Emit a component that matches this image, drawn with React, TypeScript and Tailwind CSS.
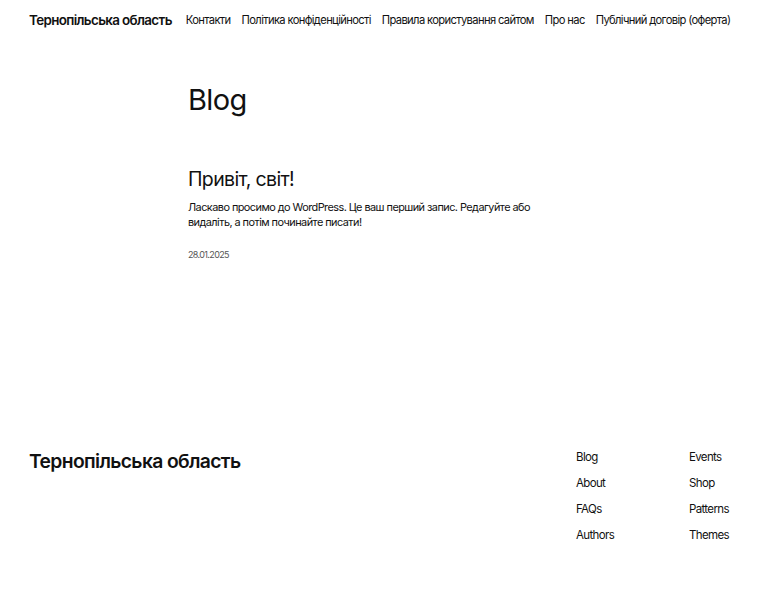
import React from 'react';

const navLinks = [
  'Контакти',
  'Політика конфіденційності',
  'Правила користування сайтом',
  'Про нас',
  'Публічний договір (оферта)',
];

const footerCol1 = ['Blog', 'About', 'FAQs', 'Authors'];
const footerCol2 = ['Events', 'Shop', 'Patterns', 'Themes'];

export default function App() {
  return (
    <div className="min-h-[600px] bg-white text-[#111] font-['Inter','Liberation_Sans',sans-serif] tracking-[-0.04em]">
      <header className="flex items-center gap-[14px] px-[29px] pt-[5px] h-[36px]">
        <div className="text-[13.4px] font-semibold whitespace-nowrap">Тернопільська область</div>
        <nav className="flex items-center gap-[11px] text-[11.2px] whitespace-nowrap">
          {navLinks.map((l) => (
            <a key={l} href="#">
              {l}
            </a>
          ))}
        </nav>
      </header>

      <main className="pl-[188px]">
        <h1 className="mt-[46px] text-[29px] leading-[36px] font-normal">Blog</h1>
        <article className="mt-[49px] w-[350px]">
          <h2 className="text-[19.5px] leading-[24px] font-normal">Привіт, світ!</h2>
          <p className="mt-[9px] text-[10.9px] leading-[15px] tracking-[-0.05em]">
            Ласкаво просимо до WordPress. Це ваш перший запис. Редагуйте або видаліть, а потім починайте писати!
          </p>
          <div className="mt-[18px] text-[9px] text-[#555]">28.01.2025</div>
        </article>
      </main>

      <footer className="mt-[188px] flex justify-between px-[29px]">
        <div className="text-[19.3px] font-semibold leading-[22px] whitespace-nowrap">Тернопільська область</div>
        <div className="flex text-[11.5px]">
          <ul className="w-[113px] flex flex-col gap-[11px]">
            {footerCol1.map((l) => (
              <li key={l} className="leading-[15px]">{l}</li>
            ))}
          </ul>
          <ul className="w-[42px] flex flex-col gap-[11px]">
            {footerCol2.map((l) => (
              <li key={l} className="leading-[15px]">{l}</li>
            ))}
          </ul>
        </div>
      </footer>
    </div>
  );
}
